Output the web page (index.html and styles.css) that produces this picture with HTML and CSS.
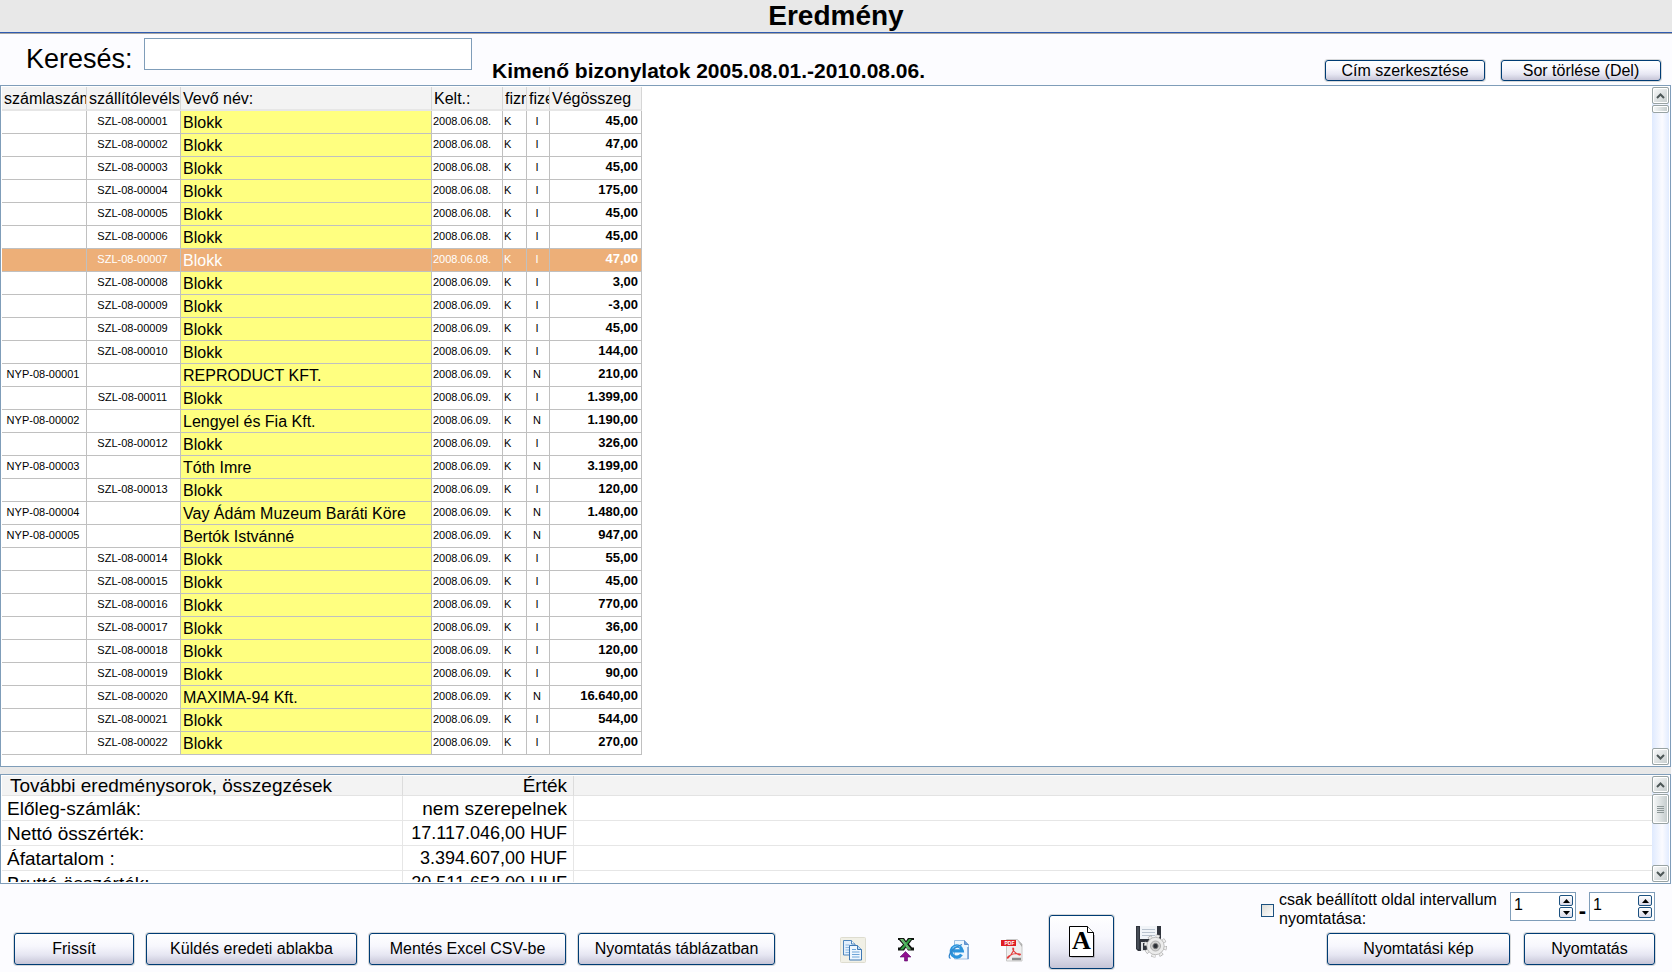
FILE: index.html
```html
<!DOCTYPE html>
<html lang="hu">
<head>
<meta charset="utf-8">
<title>Eredmény</title>
<link rel="stylesheet" href="styles.css">
</head>
<body>
<header class="titlebar"><h1>Eredmény</h1></header>

<section class="toolbar">
  <label class="search-label" for="search">Keresés:</label>
  <input class="search" id="search" type="text">
  <h2 class="subtitle">Kimenő bizonylatok 2005.08.01.-2010.08.06.</h2>
  <div class="toolbar-actions">
    <button class="btn btn-small" type="button">Cím szerkesztése</button>
    <button class="btn btn-small" type="button">Sor törlése (Del)</button>
  </div>
</section>

<main class="panel results">
  <div class="panel-body">
    <table class="grid">
      <colgroup><col class="c-inv"><col class="c-del"><col class="c-name"><col class="c-date"><col class="c-mode"><col class="c-paid"><col class="c-sum"></colgroup>
      <thead><tr><th>számlaszám</th><th>szállítólevélsz</th><th>Vevő név:</th><th>Kelt.:</th><th>fizm</th><th>fize</th><th>Végösszeg</th></tr></thead>
      <tbody>
        <tr><td></td><td>SZL-08-00001</td><td>Blokk</td><td>2008.06.08.</td><td>K</td><td>I</td><td>45,00</td></tr>
        <tr><td></td><td>SZL-08-00002</td><td>Blokk</td><td>2008.06.08.</td><td>K</td><td>I</td><td>47,00</td></tr>
        <tr><td></td><td>SZL-08-00003</td><td>Blokk</td><td>2008.06.08.</td><td>K</td><td>I</td><td>45,00</td></tr>
        <tr><td></td><td>SZL-08-00004</td><td>Blokk</td><td>2008.06.08.</td><td>K</td><td>I</td><td>175,00</td></tr>
        <tr><td></td><td>SZL-08-00005</td><td>Blokk</td><td>2008.06.08.</td><td>K</td><td>I</td><td>45,00</td></tr>
        <tr><td></td><td>SZL-08-00006</td><td>Blokk</td><td>2008.06.08.</td><td>K</td><td>I</td><td>45,00</td></tr>
        <tr class="selected"><td></td><td>SZL-08-00007</td><td>Blokk</td><td>2008.06.08.</td><td>K</td><td>I</td><td>47,00</td></tr>
        <tr><td></td><td>SZL-08-00008</td><td>Blokk</td><td>2008.06.09.</td><td>K</td><td>I</td><td>3,00</td></tr>
        <tr><td></td><td>SZL-08-00009</td><td>Blokk</td><td>2008.06.09.</td><td>K</td><td>I</td><td>-3,00</td></tr>
        <tr><td></td><td>SZL-08-00009</td><td>Blokk</td><td>2008.06.09.</td><td>K</td><td>I</td><td>45,00</td></tr>
        <tr><td></td><td>SZL-08-00010</td><td>Blokk</td><td>2008.06.09.</td><td>K</td><td>I</td><td>144,00</td></tr>
        <tr><td>NYP-08-00001</td><td></td><td>REPRODUCT KFT.</td><td>2008.06.09.</td><td>K</td><td>N</td><td>210,00</td></tr>
        <tr><td></td><td>SZL-08-00011</td><td>Blokk</td><td>2008.06.09.</td><td>K</td><td>I</td><td>1.399,00</td></tr>
        <tr><td>NYP-08-00002</td><td></td><td>Lengyel és Fia Kft.</td><td>2008.06.09.</td><td>K</td><td>N</td><td>1.190,00</td></tr>
        <tr><td></td><td>SZL-08-00012</td><td>Blokk</td><td>2008.06.09.</td><td>K</td><td>I</td><td>326,00</td></tr>
        <tr><td>NYP-08-00003</td><td></td><td>Tóth Imre</td><td>2008.06.09.</td><td>K</td><td>N</td><td>3.199,00</td></tr>
        <tr><td></td><td>SZL-08-00013</td><td>Blokk</td><td>2008.06.09.</td><td>K</td><td>I</td><td>120,00</td></tr>
        <tr><td>NYP-08-00004</td><td></td><td>Vay Ádám Muzeum Baráti Köre</td><td>2008.06.09.</td><td>K</td><td>N</td><td>1.480,00</td></tr>
        <tr><td>NYP-08-00005</td><td></td><td>Bertók Istvánné</td><td>2008.06.09.</td><td>K</td><td>N</td><td>947,00</td></tr>
        <tr><td></td><td>SZL-08-00014</td><td>Blokk</td><td>2008.06.09.</td><td>K</td><td>I</td><td>55,00</td></tr>
        <tr><td></td><td>SZL-08-00015</td><td>Blokk</td><td>2008.06.09.</td><td>K</td><td>I</td><td>45,00</td></tr>
        <tr><td></td><td>SZL-08-00016</td><td>Blokk</td><td>2008.06.09.</td><td>K</td><td>I</td><td>770,00</td></tr>
        <tr><td></td><td>SZL-08-00017</td><td>Blokk</td><td>2008.06.09.</td><td>K</td><td>I</td><td>36,00</td></tr>
        <tr><td></td><td>SZL-08-00018</td><td>Blokk</td><td>2008.06.09.</td><td>K</td><td>I</td><td>120,00</td></tr>
        <tr><td></td><td>SZL-08-00019</td><td>Blokk</td><td>2008.06.09.</td><td>K</td><td>I</td><td>90,00</td></tr>
        <tr><td></td><td>SZL-08-00020</td><td>MAXIMA-94 Kft.</td><td>2008.06.09.</td><td>K</td><td>N</td><td>16.640,00</td></tr>
        <tr><td></td><td>SZL-08-00021</td><td>Blokk</td><td>2008.06.09.</td><td>K</td><td>I</td><td>544,00</td></tr>
        <tr><td></td><td>SZL-08-00022</td><td>Blokk</td><td>2008.06.09.</td><td>K</td><td>I</td><td>270,00</td></tr>
      </tbody>
    </table>
  </div>
  <div class="scrollbar">
    <button class="sb-btn" type="button" aria-label="Fel"><svg width="9" height="6" viewBox="0 0 9 6"><path d="M1 5 4.500 1.500 8 5"/></svg></button>
    <div class="thumb thumb-short"></div>
    <button class="sb-btn sb-down" type="button" aria-label="Le"><svg width="9" height="6" viewBox="0 0 9 6"><path d="M1 1 4.500 4.500 8 1"/></svg></button>
  </div>
</main>

<section class="panel summary">
  <div class="panel-body">
    <table class="totals">
      <colgroup><col class="t-label"><col class="t-value"><col></colgroup>
      <thead><tr><th>További eredménysorok, összegzések</th><th>Érték</th><th></th></tr></thead>
      <tbody>
        <tr><td>Előleg-számlák:</td><td>nem szerepelnek</td><td></td></tr>
        <tr><td>Nettó összérték:</td><td class="amount">17.117.046,00 HUF</td><td></td></tr>
        <tr><td>Áfatartalom :</td><td class="amount">3.394.607,00 HUF</td><td></td></tr>
        <tr><td>Bruttó összérték:</td><td class="amount">20.511.653,00 HUF</td><td></td></tr>
      </tbody>
    </table>
  </div>
  <div class="scrollbar">
    <button class="sb-btn" type="button" aria-label="Fel"><svg width="9" height="6" viewBox="0 0 9 6"><path d="M1 5 4.500 1.500 8 5"/></svg></button>
    <div class="thumb thumb-long"><i></i><i></i><i></i><i></i></div>
    <button class="sb-btn sb-down" type="button" aria-label="Le"><svg width="9" height="6" viewBox="0 0 9 6"><path d="M1 1 4.500 4.500 8 1"/></svg></button>
  </div>
</section>

<footer class="footer">
  <div class="actions">
    <button class="btn w-refresh" type="button">Frissít</button>
    <button class="btn w-send" type="button">Küldés eredeti ablakba</button>
    <button class="btn w-wide" type="button">Mentés Excel CSV-be</button>
    <button class="btn w-wide" type="button">Nyomtatás táblázatban</button>
  </div>
  <div class="icons">
    <button class="icon" type="button" aria-label="Másolás">
      <svg width="26" height="26" viewBox="0 0 26 26">
        <rect x=".5" y=".5" width="25" height="25" rx="1" fill="#f1f0e6" stroke="#deddd0"/>
        <g stroke="#4f86bd" fill="#e3f0fc"><path d="M3.500 3.500h8l3.500 3.500v11h-11.500z"/><path d="M11.500 3.500v3.500h3.500" fill="#fff"/></g>
        <path d="M5.500 8h4M5.500 10.500h4M5.500 13h4M5.500 15.500h4" stroke="#8db9e2"/>
        <g stroke="#3f78b3" fill="#eef7ff"><path d="M9.500 8.500h8l4 4v10.500h-12z"/><path d="M17.500 8.500v4h4" fill="#bcd9f3"/></g>
        <path d="M12 12.500h4M12 15h7.500M12 17.500h7.500M12 20h7.500" stroke="#6ea5d8" stroke-width="1.200"/>
      </svg>
    </button>
    <button class="icon" type="button" aria-label="Excel">
      <svg width="18" height="26" viewBox="0 0 18 26">
        <path d="M1 1h6l2 3 2-3h6v2h-2l-3 4 3 3.500h2v3h-6l-2-3-2 3H1v-3h2l3-3L2 3H1z" fill="#101410"/>
        <path d="M3 2h3l8 10.500h-3z" fill="#8fce8c"/><path d="M14.500 2h-2.500L3 12.500h3z" fill="#35a346"/><path d="M4 2.500h2l7.500 9.500h-2z" fill="#57b565"/>
        <path d="M8.500 14.500 14 20h-3.500v4h-3v-4H3z" fill="#91108f" stroke="#5b0969" stroke-width=".6"/>
      </svg>
    </button>
    <button class="icon" type="button" aria-label="Böngésző">
      <svg width="22" height="26" viewBox="0 0 22 26">
        <path d="M6.500 3.500h10l4 4V22h-14z" fill="#edf6fe" stroke="#9fbfe0"/><path d="M16.500 3.500v4h4" fill="#6f9fd8" stroke="#5d90cc"/>
        <path d="M20 10v12" stroke="#6f9cd0" stroke-width="1.500"/>
        <path d="M13.500 17.500A5.600 5.600 0 1 1 14.300 13.800H5" fill="none" stroke="#2b93dc" stroke-width="3.200"/>
        <path d="M4.500 11.500A5.600 5.600 0 0 1 12 10" fill="none" stroke="#78c8f8" stroke-width="1.200"/>
        <path d="M2.500 21.500C-1.500 20 4 11 14 7.500" fill="none" stroke="#3285cc" stroke-width="1.300"/>
      </svg>
    </button>
    <button class="icon" type="button" aria-label="PDF">
      <svg width="22" height="26" viewBox="0 0 22 26">
        <path d="M5.500 2.500h11l4.500 4.500V24H5.500z" fill="#eee" stroke="#c8c8c8"/>
        <path d="M16 3l5 4.500V10z" fill="#aaa"/>
        <rect x="0" y="3" width="15" height="6" fill="#df1d22"/>
        <text x="3.500" y="8" font-family="Liberation Sans" font-weight="bold" font-size="5" fill="#fff">PDF</text>
        <path d="M12 11c2 0-.5 6-5 10-1 .5-1-.5 1-2 3-2 7-3 11-2 1 .5 0 1.500-1.500.5C14 16 11 13 12 11z" fill="none" stroke="#e33b3b" stroke-width="1.100"/>
        <path d="M11 22h9" stroke="#8a8a8a" stroke-width="2.500"/>
      </svg>
    </button>
    <button class="btn preview" type="button" aria-label="Betűtípus">
      <svg width="26" height="32" viewBox="0 0 26 32">
        <path d="M2.500 31.500h23V9" fill="none" stroke="#b9b9c2"/>
        <path d="M.5.500h18l6 6v24H.5z" fill="#fff" stroke="#000"/><path d="M18.500.500v6h6" fill="#fff" stroke="#000"/>
        <text x="12.500" y="23" text-anchor="middle" font-family="Liberation Serif" font-weight="bold" font-size="26">A</text>
      </svg>
    </button>
    <button class="icon icon-save" type="button" aria-label="Mentés beállításai">
      <svg width="32" height="33" viewBox="0 0 32 33">
        <path d="M1 1h25v25H3l-2-2z" fill="#30343d"/><path d="M3 2v22" stroke="#5d6470"/>
        <rect x="5" y="1" width="17" height="13" fill="#f1f4f8"/><path d="M7 4.500h13M7 7.500h13M7 10.500h13" stroke="#b9c3cf"/>
        <rect x="6" y="17" width="14" height="9" fill="#dfe1e4"/><rect x="8" y="18" width="4" height="7" fill="#30343d"/>
        <circle cx="20.500" cy="21" r="9.700" fill="none" stroke="#a3a3a3" stroke-width="3.600" stroke-dasharray="3.800 3.818"/>
        <circle cx="20.500" cy="21" r="9.600" fill="none" stroke="#eee" stroke-width="2.800" stroke-dasharray="3 4.540" stroke-dashoffset="-.4"/>
        <circle cx="20.500" cy="21" r="8.700" fill="#ececec" stroke="#a8a8a8" stroke-width=".7"/>
        <circle cx="20.500" cy="21" r="5" fill="#d2d2d2" stroke="#b0b0b0"/><circle cx="20.500" cy="21" r="2.600" fill="#2b2f36" stroke="#777"/>
      </svg>
    </button>
  </div>
  <div class="print">
    <div class="range">
      <input class="check" id="only-range" type="checkbox">
      <label class="range-label" for="only-range">csak beállított oldal intervallum nyomtatása:</label>
      <div class="spinner">
        <input type="text" value="1" aria-label="Első oldal">
        <div class="steps"><button type="button" aria-label="Növel"><svg width="7" height="4"><path d="M0 4 3.500 0 7 4z"/></svg></button><button type="button" aria-label="Csökkent"><svg width="7" height="4"><path d="M0 0h7L3.500 4z"/></svg></button></div>
      </div>
      <span class="dash">-</span>
      <div class="spinner">
        <input type="text" value="1" aria-label="Utolsó oldal">
        <div class="steps"><button type="button" aria-label="Növel"><svg width="7" height="4"><path d="M0 4 3.500 0 7 4z"/></svg></button><button type="button" aria-label="Csökkent"><svg width="7" height="4"><path d="M0 0h7L3.500 4z"/></svg></button></div>
      </div>
    </div>
    <div class="print-actions">
      <button class="btn w-preview" type="button">Nyomtatási kép</button>
      <button class="btn w-print" type="button">Nyomtatás</button>
    </div>
  </div>
</footer>
</body>
</html>
```

FILE: styles.css
```css
* { box-sizing: border-box; }

body {
  margin: 0;
  min-height: 100vh;
  display: flex;
  flex-direction: column;
  background: #fcfcff;
  color: #000;
  font-family: "Liberation Sans", Arial, sans-serif;
  font-size: 16px;
}

button, input { font: inherit; color: inherit; }
svg { display: block; }

.titlebar {
  background: #e8e8e8;
  border-bottom: 1px solid #2f5bb0;
  box-shadow: 0 1px 0 #a6a6a6;
}
.titlebar h1 {
  margin: 0;
  font-size: 28px;
  line-height: 32px;
  text-align: center;
}

.toolbar {
  display: flex;
  align-items: flex-start;
  padding: 5px 11px 0 26px;
  min-height: 52px;
}
.search-label { width: 118px; padding-top: 6px; font-size: 27px; line-height: 31px; }
.search {
  width: 328px;
  height: 32px;
  padding: 0 4px;
  border: 1px solid #7f9db9;
  background: #fff;
}
.subtitle { margin: 0 0 0 20px; padding-top: 21px; font-size: 21px; line-height: 24px; }
.toolbar-actions { display: flex; gap: 16px; margin-left: auto; padding-top: 22px; }

.btn {
  display: flex;
  align-items: center;
  justify-content: center;
  height: 32px;
  padding: 0;
  border: 1px solid #003c74;
  border-radius: 3px;
  background: linear-gradient(#fff, #f7f7fd 40%, #e6e6f2 70%, #c6c5d7);
  box-shadow: 0 0 0 1px #d6d8da;
  white-space: nowrap;
}
.btn-small { width: 160px; height: 21px; }

.panel {
  display: flex;
  margin-right: 1px;
  padding: 1px;
  border: 1px solid #7f9db9;
  background: #fff;
}
.panel-body { flex: 1; min-width: 0; overflow: hidden; }
.results { flex: 1; box-shadow: 0 7px 0 #e8e8e8; margin-bottom: 7px; }
.summary { height: 110px; }

table { border-collapse: separate; border-spacing: 0; table-layout: fixed; }
th { font-weight: normal; text-align: left; }

.grid { width: 640px; }
.c-inv { width: 85px; }
.c-del { width: 94px; }
.c-name { width: 251px; }
.c-date { width: 71px; }
.c-mode { width: 24px; }
.c-paid { width: 23px; }
.c-sum { width: 92px; }
.grid th {
  height: 24px;
  padding: 1px 0 0 2px;
  overflow: hidden;
  white-space: nowrap;
  line-height: 20px;
  border-right: 1px solid #d6d6d6;
  border-bottom: 2px solid #e6e6e6;
  background: #f3f3f3;
}
.grid td {
  height: 23px;
  padding: 4px 3px 0 1px;
  overflow: hidden;
  vertical-align: top;
  white-space: nowrap;
  font-size: 11px;
  line-height: 12px;
  border-right: 1px solid #c0c0c0;
  border-bottom: 1px solid #c0c0c0;
}
.grid td:nth-child(1), .grid td:nth-child(2), .grid td:nth-child(6) { text-align: center; }
.grid td:nth-child(3) { padding: 3px 2px 0; font-size: 16px; line-height: 18px; background: #ffff80; }
.grid td:nth-child(7) { padding-top: 3px; font-size: 13px; line-height: 14px; font-weight: bold; text-align: right; }
.grid .selected td { background: #edaf78; color: #fff; }

.totals { width: 100%; font-size: 19px; }
.t-label { width: 401px; }
.t-value { width: 171px; }
.totals th {
  height: 20px;
  padding: 1px 6px 0 8px;
  line-height: 18px;
  border-right: 1px solid #dcdcdc;
  border-bottom: 1px solid #e3e3e3;
  background: #f3f3f3;
}
.totals td {
  height: 25px;
  padding: 1px 6px 0 5px;
  line-height: 23px;
  border-right: 1px solid #e6e6e6;
  border-bottom: 1px solid #e6e6e6;
  white-space: nowrap;
}
.totals th:nth-child(2), .totals td:nth-child(2) { text-align: right; }
.totals th:nth-child(3), .totals td:nth-child(3) { border-right: 0; }
.totals .amount { font-size: 18px; }

.scrollbar {
  display: flex;
  flex-direction: column;
  gap: 1px;
  width: 17px;
  background: linear-gradient(90deg, #dfeafe, #fbfbff 60%, #e2ecff);
}
.sb-btn {
  display: flex;
  align-items: center;
  justify-content: center;
  height: 17px;
  padding: 0;
  border: 1px solid #98a3a3;
  border-radius: 2px;
  background: linear-gradient(135deg, #fafbfb, #c4cbcc);
  box-shadow: inset 0 0 0 1px #fff;
}
.sb-btn path { fill: none; stroke: #4d5757; stroke-width: 2; }
.sb-down { margin-top: auto; }
.thumb {
  display: flex;
  flex-direction: column;
  align-items: center;
  justify-content: center;
  gap: 1px;
  border: 1px solid #98a3a3;
  border-radius: 2px;
  background: linear-gradient(90deg, #f7f9f9, #c2cacb);
  box-shadow: inset 0 0 0 1px #fff;
}
.thumb-short { height: 8px; }
.thumb-long { height: 30px; }
.thumb i { width: 7px; height: 1px; background: #8c9797; }

.footer {
  display: flex;
  align-items: flex-end;
  min-height: 88px;
  padding: 0 17px 7px 14px;
}
.actions { display: flex; gap: 12px; }
.w-refresh { width: 120px; }
.w-send { width: 211px; }
.w-wide { width: 197px; }

.icons { display: flex; align-items: flex-end; gap: 21px; margin-left: 62px; }
.icon {
  display: flex;
  justify-content: center;
  width: 32px;
  padding: 0 0 2px;
  border: 0;
  background: none;
}
.icon-save { padding-bottom: 7px; }
.preview { width: 65px; height: 54px; margin-bottom: -4px; }

.print { margin-left: auto; }
.range { display: flex; align-items: flex-start; margin-bottom: 5px; }
.check {
  appearance: none;
  width: 13px;
  height: 13px;
  margin: 14px 5px 0 0;
  border: 1px solid #1c5180;
  background: linear-gradient(135deg, #dcdcd7, #fff);
}
.range-label { width: 231px; line-height: 19px; }
.spinner {
  display: flex;
  width: 66px;
  height: 29px;
  padding: 1px 2px;
  margin-top: 2px;
  border: 1px solid #7f9db9;
  background: #fff;
}
.spinner input { flex: 1; min-width: 0; height: 22px; padding: 0 1px; border: 0; outline: 0; background: none; }
.steps { display: flex; flex-direction: column; gap: 1px; padding-top: 1px; }
.steps button {
  display: flex;
  align-items: center;
  justify-content: center;
  width: 14px;
  height: 11px;
  padding: 0;
  border: 1px solid #1c5180;
  border-radius: 2px;
  background: linear-gradient(#fff, #dadae8);
}
.dash { width: 13px; padding-top: 10px; font-size: 22px; line-height: 22px; font-weight: bold; text-align: center; }
.print-actions { display: flex; justify-content: flex-end; gap: 14px; }
.w-preview { width: 183px; }
.w-print { width: 131px; }
```
